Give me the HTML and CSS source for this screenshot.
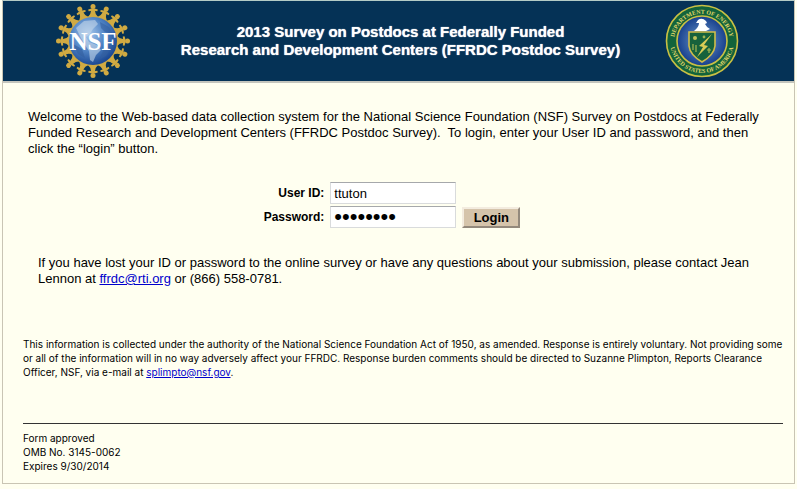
FILE: index.html
```
<!DOCTYPE html>
<html lang="en">
<head>
  <meta charset="UTF-8">
  <title>FFRDC Postdoc Survey</title>
  <link rel="stylesheet" href="styles.css">
</head>
<body>
<div class="page">
  <header class="banner">
    <svg class="logo" viewBox="-38 -38 76 76" role="img" aria-label="NSF">
      <defs>
        <radialGradient id="globe" cx="40%" cy="35%" r="65%">
          <stop offset="0" stop-color="#a9c9ed"/>
          <stop offset=".55" stop-color="#4f83c4"/>
          <stop offset="1" stop-color="#1d4a94"/>
        </radialGradient>
        <g id="person">
          <circle cy="-34.5" r="2.5"/>
          <path d="M-4.8 -31.5 L-1.5 -32.5 H1.5 L4.8 -31.5 L4.4 -29.8 L2 -30 Q2.2 -26.5 5 -24 H-5 Q-2.2 -26.5 -2 -30 L-4.4 -29.8Z"/>
        </g>
      </defs>
      <g fill="#d0aa42">
        <circle r="25"/>
        <use href="#person"/>
        <use href="#person" transform="rotate(22.5)"/>
        <use href="#person" transform="rotate(45)"/>
        <use href="#person" transform="rotate(67.5)"/>
        <use href="#person" transform="rotate(90)"/>
        <use href="#person" transform="rotate(112.5)"/>
        <use href="#person" transform="rotate(135)"/>
        <use href="#person" transform="rotate(157.5)"/>
        <use href="#person" transform="rotate(180)"/>
        <use href="#person" transform="rotate(202.5)"/>
        <use href="#person" transform="rotate(225)"/>
        <use href="#person" transform="rotate(247.5)"/>
        <use href="#person" transform="rotate(270)"/>
        <use href="#person" transform="rotate(292.5)"/>
        <use href="#person" transform="rotate(315)"/>
        <use href="#person" transform="rotate(337.5)"/>
      </g>
      <circle r="24" fill="url(#globe)"/>
      <path fill="#c5d7ea" opacity=".6" d="M-17 -13 L-9 -20 L2 -21 L5 -17 L0 -12 L-3 -7 L-7 -4 L-4 1 L4 4 L8 9 L3 14 L0 21 L-3 19 L-4 10 L-8 4 L-12 -3Z"/>
      <path fill="#345f9e" opacity=".6" d="M7 -19 L16 -14 L20 -7 L12 -9 L8 -13Z M-20 3 L-11 8 L-8 17 L-15 13Z M11 7 L18 7 L13 15 L7 18Z"/>
      <text class="nsf" x="0" y="9" text-anchor="middle">NSF</text>
    </svg>
    <h1>2013 Survey on Postdocs at Federally Funded<br>Research and Development Centers (FFRDC Postdoc Survey)</h1>
    <svg class="logo" viewBox="-38 -38 76 76" role="img" aria-label="Department of Energy, United States of America">
      <defs>
        <radialGradient id="sky">
          <stop offset="0" stop-color="#6f9cd0"/>
          <stop offset="1" stop-color="#173f8c"/>
        </radialGradient>
        <path id="arc-top" d="M-27.5 6 A28 28 0 1 1 27.5 6"/>
        <path id="arc-bottom" d="M-32 0 A32 32 0 0 0 32 0"/>
      </defs>
      <circle r="35.5" fill="#12633b" stroke="#c9c044" stroke-width="1.6"/>
      <text class="seal"><textPath href="#arc-top" startOffset="50%" text-anchor="middle">DEPARTMENT OF ENERGY</textPath></text>
      <text class="seal"><textPath href="#arc-bottom" startOffset="50%" text-anchor="middle">UNITED STATES OF AMERICA</textPath></text>
      <circle r="25" fill="url(#sky)" stroke="#c9c044" stroke-width="1.6"/>
      <path fill="#fff" d="M-4 -21 Q0 -24 4 -20 L5 -18 L3 -17 Q5 -13 8 -12 L4 -10 H-8 Q-3 -14 -3 -18 L-6 -18Z"/>
      <path fill="#17623c" stroke="#d1bd49" stroke-width="1.6" d="M-13 -9 H13 V5 Q12 14 0 21 Q-12 14 -13 5Z"/>
      <path fill="#d8cc55" d="M10 -7 L-3 5 L1 6 L-5 16 L6 5 L2 4Z"/>
      <circle cx="-7" cy="-3" r="2" fill="#bdc15a"/>
      <circle cx="2" cy="-4" r="1.4" fill="#9eb455"/>
      <path stroke="#a7b852" stroke-width="1.2" d="M-9 3 V9 M-6 4 V11 M5 9 H9 M7 7 V12"/>
    </svg>
  </header>

  <main>
    <p class="welcome">Welcome to the Web-based data collection system for the National Science Foundation (NSF) Survey on Postdocs at Federally Funded Research and Development Centers (FFRDC Postdoc Survey).&nbsp; To login, enter your User ID and password, and then click the “login” button.</p>

    <form class="login">
      <label for="userid">User ID:</label>
      <input type="text" id="userid" value="ttuton">
      <label for="password" class="row2">Password:</label>
      <input type="password" id="password" value="password">
      <button type="button">Login</button>
    </form>

    <p class="contact">If you have lost your ID or password to the online survey or have any questions about your submission, please contact Jean Lennon at <a href="mailto:ffrdc@rti.org">ffrdc@rti.org</a> or (866) 558-0781.</p>

    <p class="notice">This information is collected under the authority of the National Science Foundation Act of 1950, as amended. Response is entirely voluntary. Not providing some or all of the information will in no way adversely affect your FFRDC. Response burden comments should be directed to Suzanne Plimpton, Reports Clearance Officer, NSF, via e-mail at <a href="mailto:splimpto@nsf.gov">splimpto@nsf.gov</a>.</p>
  </main>

  <footer>
    Form approved<br>
    OMB No. 3145-0062<br>
    Expires 9/30/2014
  </footer>
</div>
</body>
</html>
```
FILE: styles.css
```
body {
  margin: 0;
  padding: 0 2px 5px;
  background: #fffff0;
  color: #000;
  font-family: "Liberation Sans", Arial, sans-serif;
  font-size: 13px;
  line-height: 16px;
}

.page {
  border: 1px solid #c9c5b4;
  border-top-color: #b4cbc6;
}

.banner {
  display: flex;
  align-items: center;
  justify-content: space-between;
  height: 80px;
  padding: 0 54px 0 52px;
  background: #053256;
  border-bottom: 2px solid #c4c5bd;
}

.banner h1 {
  margin: 0;
  padding-left: 6px;
  color: #fff;
  font-size: 15px;
  line-height: 18px;
  text-align: center;
  text-shadow: 0 0 1px #fff;
}

.logo {
  width: 76px;
  height: 76px;
}

.nsf {
  fill: #fff;
  font-family: "Liberation Serif", serif;
  font-size: 25px;
  font-weight: bold;
}

.seal {
  fill: #e0d66a;
  font-family: "Liberation Serif", serif;
  font-size: 6px;
  font-weight: bold;
}

main {
  padding: 26px 11px 0 20px;
}

p {
  margin: 0;
}

a {
  color: #00c;
}

.welcome {
  padding: 0 10px 0 5px;
}

.login {
  display: grid;
  grid-template-columns: max-content 126px 58px;
  gap: 2px 6px;
  align-items: center;
  justify-content: center;
  margin: 25px 0 27px;
  padding-right: 22px;
}

.login label {
  font-size: 12px;
  font-weight: bold;
  text-align: right;
}

.login .row2 {
  grid-column: 1;
}

.login input {
  box-sizing: border-box;
  width: 100%;
  height: 22px;
  padding: 1px 3px;
  border: 1px solid #d9dbdc;
  border-top-color: #a6a8ab;
  background: #fff;
  color: #000;
  font-family: inherit;
  font-size: 13px;
}

/* bigger bullets */
.login input[type="password"] {
  font-size: 22px;
}

.login button {
  height: 21px;
  padding: 0;
  border: 2px solid;
  border-color: #f3ecdf #93897c #93897c #f3ecdf;
  background: #d5c4ab;
  color: #000;
  font-family: inherit;
  font-size: 13px;
  font-weight: bold;
}

.contact {
  padding: 0 20px 0 15px;
}

.notice {
  margin-top: 50px;
}

.notice,
footer {
  font-family: Inter, "Liberation Sans", sans-serif;
  font-size: 10px;
  line-height: 14px;
}

footer {
  margin: 44px 11px 0 20px;
  padding: 7px 0 10px;
  border-top: 1px solid #333;
}
```
